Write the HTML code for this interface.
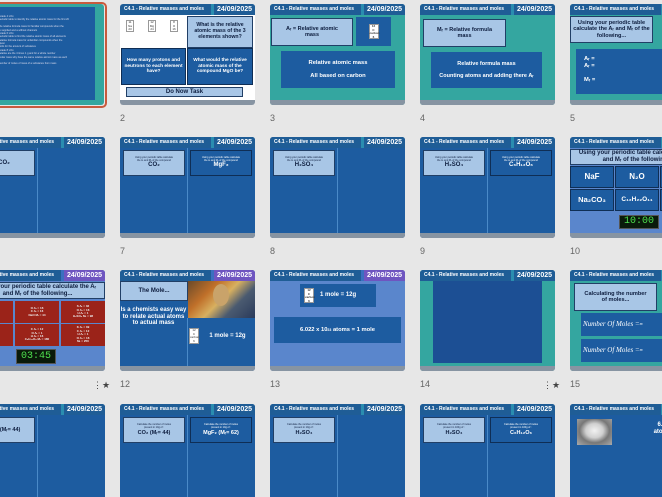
<!DOCTYPE html>
<html><head><meta charset="utf-8"><style>
*{margin:0;padding:0;box-sizing:border-box}
html,body{width:662px;height:497px;overflow:hidden}
body{background:#e7e7e7;font-family:"Liberation Sans",sans-serif}
#w{position:absolute;left:0;top:0;width:662px;height:497px;overflow:hidden}
.s{position:absolute;width:135px;height:101px;border-radius:3px;overflow:hidden;background:#1d5ca0}
.teal{background:#34a6a0}
.tex{background:#5a86cc}
.h{position:absolute;left:0;top:0;width:135px;height:11px;background:#1f5d96}
.h .t{position:absolute;left:4px;top:2px;font-size:5px;color:#fff;font-weight:bold;white-space:nowrap}
.h .d{position:absolute;right:0;top:0;width:44px;height:11px;background:#1f5d96;border-left:3px solid #2a8db0;color:#fff;font-weight:bold;font-size:7px;text-align:center;line-height:11px}
.h .d.p{background:#6f55c0;border-left-color:#3a6fc0}
.f{position:absolute;left:0;bottom:0;width:135px;height:5px;background:#8794a2}
.b{position:absolute;text-align:center;font-weight:bold;display:flex;align-items:center;justify-content:center;line-height:1.15}
.lt{background:#a8c6e6;color:#0d1d3e;border:1px solid #213f66}
.dk{background:#1d5ca0;color:#fff}
.dk2{background:#1d5ca0;color:#fff;border:1px solid #0f2e55}
.red{background:#9b2319;color:#eee;font-size:3px}
.lab{position:absolute;font-size:9px;color:#666}
.vl{position:absolute;top:11px;bottom:5px;width:1px;background:#4a8ac8}
.el{position:absolute;background:#fff;border:1px solid #999;font-size:3px;color:#333;text-align:center;line-height:1.2}
.tm{position:absolute;background:#0a1a0a;color:#4ee04e;font-family:"Liberation Mono",monospace;text-align:center;border:1px solid #555}
.star{position:absolute;font-size:9px;color:#444}
</style></head><body><div id="w">

<div style="position:absolute;left:-34px;top:2px;width:141px;height:106px;border:2px solid #c85a3e;border-radius:5px"></div>
<div class="s teal" style="left:-31px;top:4px;">
 <div class="b dk" style="left:0;top:3px;width:126px;height:93px;display:block;text-align:left;font-size:2.5px;font-weight:normal;color:#dde;padding:8px 0 0 30px;line-height:1.35">
  Grade 4 LOs:<br>periodic table to identify the relative atomic mass for the first 20<br><br>the relative formula mass for familiar compounds when the<br>is supplied and a without channels<br>Grade 6 LOs:<br>periodic table to find the relative atomic mass of all elements<br>relative formula mass for unfamiliar compounds when the<br>given<br>units for the amount of substance<br>Grade 8 LOs:<br>relative are the 4 times 1 g and for a whole number<br>molar mass why have the same relative atomic mass as each<br><br>number of moles of mass of a substance from mass
 </div>
</div>

<div class="s" style="left:120px;top:4px;background:#fff">
 <div class="h"><div class="t">C4.1 - Relative masses and moles</div><div class="d">24/09/2025</div></div>
 <div class="el" style="left:6px;top:16px;width:8px;height:12px">11<br>Na<br>23</div>
 <div class="el" style="left:28px;top:16px;width:8px;height:12px">12<br>Mg<br>24</div>
 <div class="el" style="left:50px;top:16px;width:8px;height:12px">8<br>O<br>16</div>
 <div class="b lt" style="left:67px;top:12px;width:66px;height:32px;font-size:5.2px">What is the relative atomic mass of the 3 elements shown?</div>
 <div class="b dk2" style="left:1px;top:44px;width:65px;height:37px;font-size:4.8px">How many protons and neutrons to each element have?</div>
 <div class="b dk2" style="left:67px;top:44px;width:66px;height:37px;font-size:4.8px">What would the relative atomic mass of the compound MgO be?</div>
 <div class="b lt" style="left:6px;top:83px;width:117px;height:10px;font-size:6px">Do Now Task</div>
 <div class="f"></div>
</div>
<div class="lab" style="left:120px;top:113px">2</div>

<div class="s teal" style="left:270px;top:4px">
 <div class="h"><div class="t">C4.1 - Relative masses and moles</div><div class="d">24/09/2025</div></div>
 <div class="b lt" style="left:1px;top:14px;width:82px;height:28px;font-size:5.5px">Aᵣ = Relative atomic<br>mass</div>
 <div class="b dk" style="left:86px;top:13px;width:35px;height:29px"><div class="el" style="position:static;width:10px;height:15px">12<br>C<br>carbon<br>6</div></div>
 <div class="b dk" style="left:11px;top:47px;width:114px;height:37px;font-size:5.8px">Relative atomic mass<br><br>All based on carbon</div>
 <div class="f"></div>
</div>
<div class="lab" style="left:270px;top:113px">3</div>

<div class="s teal" style="left:420px;top:4px">
 <div class="h"><div class="t">C4.1 - Relative masses and moles</div><div class="d">24/09/2025</div></div>
 <div class="b lt" style="left:3px;top:15px;width:83px;height:28px;font-size:5.5px">Mᵣ = Relative formula<br>mass</div>
 <div class="b dk" style="left:11px;top:48px;width:111px;height:36px;font-size:5.5px">Relative formula mass<br><br>Counting atoms and adding there Aᵣ</div>
 <div class="f"></div>
</div>
<div class="lab" style="left:420px;top:113px">4</div>

<div class="s teal" style="left:570px;top:4px">
 <div class="h"><div class="t">C4.1 - Relative masses and moles</div><div class="d">24/09/2025</div></div>
 <div class="b lt" style="left:0;top:12px;width:83px;height:27px;font-size:5.6px">Using your periodic table calculate the Aᵣ and Mᵣ of the following...</div>
 <div class="b dk" style="left:6px;top:45px;width:129px;height:45px;font-size:5.8px;display:block;text-align:left;padding:7px 0 0 8px;line-height:1.2">Aᵣ =<br>Aᵣ =<br><br>Mᵣ =</div>
 <div class="f"></div>
</div>
<div class="lab" style="left:570px;top:113px">5</div>

<div class="s" style="left:-30px;top:137px">
 <div class="h"><div class="t">C4.1 - Relative masses and moles</div><div class="d">24/09/2025</div></div>
 <div class="vl" style="left:67px"></div>
 <div class="b lt" style="left:3px;top:13px;width:62px;height:26px;font-size:6px">CO₂</div>
 <div class="f"></div>
</div>

<div class="s" style="left:120px;top:137px">
 <div class="h"><div class="t">C4.1 - Relative masses and moles</div><div class="d">24/09/2025</div></div>
 <div class="vl" style="left:67px"></div>
 <div class="b lt" style="left:3px;top:13px;width:62px;height:26px;font-size:6px;flex-direction:column"><span style="font-size:2.5px;font-weight:normal">Using your periodic table calculate<br>the Aᵣ and Mᵣ of the compound</span>CO₂</div>
 <div class="b dk2" style="left:70px;top:13px;width:62px;height:26px;font-size:6px;flex-direction:column"><span style="font-size:2.5px;font-weight:normal">Using your periodic table calculate<br>the Aᵣ and Mᵣ of the compound</span>MgF₂</div>
 <div class="f"></div>
</div>
<div class="lab" style="left:120px;top:246px">7</div>

<div class="s" style="left:270px;top:137px">
 <div class="h"><div class="t">C4.1 - Relative masses and moles</div><div class="d">24/09/2025</div></div>
 <div class="vl" style="left:67px"></div>
 <div class="b lt" style="left:3px;top:13px;width:62px;height:26px;font-size:6px;flex-direction:column"><span style="font-size:2.5px;font-weight:normal">Using your periodic table calculate<br>the Aᵣ and Mᵣ of the compound</span>H₂SO₄</div>
 <div class="f"></div>
</div>
<div class="lab" style="left:270px;top:246px">8</div>

<div class="s" style="left:420px;top:137px">
 <div class="h"><div class="t">C4.1 - Relative masses and moles</div><div class="d">24/09/2025</div></div>
 <div class="vl" style="left:67px"></div>
 <div class="b lt" style="left:3px;top:13px;width:62px;height:26px;font-size:6px;flex-direction:column"><span style="font-size:2.5px;font-weight:normal">Using your periodic table calculate<br>the Aᵣ and Mᵣ of the compound</span>H₂SO₄</div>
 <div class="b dk2" style="left:70px;top:13px;width:62px;height:26px;font-size:6px;flex-direction:column"><span style="font-size:2.5px;font-weight:normal">Using your periodic table calculate<br>the Aᵣ and Mᵣ of the compound</span>C₆H₁₂O₆</div>
 <div class="f"></div>
</div>
<div class="lab" style="left:420px;top:246px">9</div>

<div class="s tex" style="left:570px;top:137px">
 <div class="h"><div class="t">C4.1 - Relative masses and moles</div><div class="d">24/09/2025</div></div>
 <div class="b lt" style="left:0;top:12px;width:135px;height:16px;font-size:6px">Using your periodic table calculate the Aᵣ<br>and Mᵣ of the following...</div>
 <div class="b dk2" style="left:0;top:29px;width:44px;height:22px;font-size:8px">NaF</div>
 <div class="b dk2" style="left:45px;top:29px;width:44px;height:22px;font-size:8px">N₂O</div>
 <div class="b dk2" style="left:90px;top:29px;width:45px;height:22px;font-size:8px"></div>
 <div class="b dk2" style="left:0;top:52px;width:44px;height:22px;font-size:7.5px">Na₂CO₃</div>
 <div class="b dk2" style="left:45px;top:52px;width:44px;height:22px;font-size:6.5px">C₁₂H₂₂O₁₁</div>
 <div class="b dk2" style="left:90px;top:52px;width:45px;height:22px"></div>
 <div class="tm" style="left:49px;top:78px;width:40px;height:14px;font-size:10px;line-height:12px">10:00</div>
 <div class="f"></div>
</div>
<div class="lab" style="left:570px;top:246px">10</div>

<div class="s tex" style="left:-30px;top:270px">
 <div class="h"><div class="t">C4.1 - Relative masses and moles</div><div class="d p">24/09/2025</div></div>
 <div class="b lt" style="left:0;top:12px;width:135px;height:17px;font-size:6px">Using your periodic table calculate the Aᵣ<br>and Mᵣ of the following...</div>
 <div class="b red" style="left:0;top:31px;width:43px;height:22px"></div>
 <div class="b red" style="left:45px;top:31px;width:44px;height:22px">O Aᵣ = 16<br>C Aᵣ = 16<br>NaO Mᵣ = 44</div>
 <div class="b red" style="left:91px;top:31px;width:44px;height:22px">S Aᵣ = 32<br>O Aᵣ = 16<br>H Aᵣ = 1<br>H₂SO₄ Mᵣ = 98</div>
 <div class="b red" style="left:0;top:54px;width:43px;height:22px"></div>
 <div class="b red" style="left:45px;top:54px;width:44px;height:22px">C Aᵣ = 12<br>O Aᵣ = 1<br>H Aᵣ = 16<br>C₆H₁₂O₆ Mᵣ = 180</div>
 <div class="b red" style="left:91px;top:54px;width:44px;height:22px">K Aᵣ = 39<br>C Aᵣ = 12<br>H Aᵣ = 1<br>O Aᵣ = 16<br>Mᵣ = 250</div>
 <div class="tm" style="left:46px;top:79px;width:40px;height:15px;font-size:10px;line-height:13px">03:45</div>
 <div class="f"></div>
</div>
<div class="star" style="left:93px;top:380px">⋮★</div>

<div class="s" style="left:120px;top:270px">
 <div class="h"><div class="t">C4.1 - Relative masses and moles</div><div class="d p">24/09/2025</div></div>
 <div class="b lt" style="left:0;top:11px;width:68px;height:20px;font-size:6px">The Mole...</div>
 <div style="position:absolute;left:68px;top:11px;width:67px;height:37px;background:linear-gradient(135deg,#6a4a2a 0%,#c0702a 30%,#d8b060 50%,#4a5a70 70%,#2a3a5a 100%)"></div>
 <div style="position:absolute;left:93px;top:14px;width:16px;height:22px;border-radius:50%;background:#c9a36a"></div>
 <div class="b dk" style="left:0;top:32px;width:67px;height:30px;font-size:6px">Is a chemists easy way to relate actual atoms to actual mass</div>
 <div class="vl" style="left:67px;top:48px"></div>
 <div class="el" style="left:69px;top:58px;width:10px;height:16px">12<br>C<br>carbon<br>6</div>
 <div class="b" style="left:80px;top:60px;width:55px;height:12px;color:#fff;font-size:6px">1 mole = 12g</div>
 <div class="f"></div>
</div>
<div class="lab" style="left:120px;top:379px">12</div>

<div class="s tex" style="left:270px;top:270px">
 <div class="h"><div class="t">C4.1 - Relative masses and moles</div><div class="d p">24/09/2025</div></div>
 <div class="b dk" style="left:30px;top:14px;width:76px;height:23px;justify-content:flex-start;padding-left:4px"><div class="el" style="position:static;width:10px;height:15px">12<br>C<br>carbon<br>6</div><span style="color:#fff;font-size:6px;margin-left:6px">1 mole = 12g</span></div>
 <div class="b dk" style="left:4px;top:47px;width:127px;height:26px;font-size:5.8px">6.022 x 10 <sup style="font-size:3.5px">23</sup>&nbsp;atoms = 1 mole</div>
 <div class="f"></div>
</div>
<div class="lab" style="left:270px;top:379px">13</div>

<div class="s teal" style="left:420px;top:270px">
 <div class="h"><div class="t">C4.1 - Relative masses and moles</div><div class="d">24/09/2025</div></div>
 <div style="position:absolute;left:13px;top:11px;width:109px;height:82px;background:#1c4f94"></div>
 <div class="f"></div>
</div>
<div class="lab" style="left:420px;top:379px">14</div>
<div class="star" style="left:543px;top:380px">⋮★</div>

<div class="s teal" style="left:570px;top:270px">
 <div class="h"><div class="t">C4.1 - Relative masses and moles</div><div class="d">24/09/2025</div></div>
 <div class="b lt" style="left:4px;top:13px;width:83px;height:28px;font-size:5.6px">Calculating the number<br>of moles...</div>
 <div class="b dk" style="left:11px;top:43px;width:124px;height:23px;font-family:'Liberation Serif',serif;font-style:italic;font-weight:normal;font-size:7px;justify-content:flex-start;padding-left:2px">Number Of Moles = <span style="font-size:4px">m</span></div>
 <div class="b dk" style="left:11px;top:69px;width:124px;height:23px;font-family:'Liberation Serif',serif;font-style:italic;font-weight:normal;font-size:7px;justify-content:flex-start;padding-left:2px">Number Of Moles = <span style="font-size:4px">m</span></div>
 <div class="f"></div>
</div>
<div class="lab" style="left:570px;top:379px">15</div>

<div class="s" style="left:-30px;top:404px">
 <div class="h"><div class="t">C4.1 - Relative masses and moles</div><div class="d">24/09/2025</div></div>
 <div class="vl" style="left:67px"></div>
 <div class="b lt" style="left:3px;top:13px;width:62px;height:26px;font-size:5.5px">CO₂ (Mᵣ= 44)</div>
</div>

<div class="s" style="left:120px;top:404px">
 <div class="h"><div class="t">C4.1 - Relative masses and moles</div><div class="d">24/09/2025</div></div>
 <div class="vl" style="left:67px"></div>
 <div class="b lt" style="left:3px;top:13px;width:62px;height:26px;font-size:5.5px;flex-direction:column"><span style="font-size:2.5px;font-weight:normal">Calculate the number of moles<br>present in 10g of :</span>CO₂ (Mᵣ= 44)</div>
 <div class="b dk2" style="left:70px;top:13px;width:62px;height:26px;font-size:5.5px;flex-direction:column"><span style="font-size:2.5px;font-weight:normal">Calculate the number of moles<br>present in 10g of :</span>MgF₂ (Mᵣ= 62)</div>
</div>

<div class="s" style="left:270px;top:404px">
 <div class="h"><div class="t">C4.1 - Relative masses and moles</div><div class="d">24/09/2025</div></div>
 <div class="vl" style="left:67px"></div>
 <div class="b lt" style="left:3px;top:13px;width:62px;height:26px;font-size:5.5px;flex-direction:column"><span style="font-size:2.5px;font-weight:normal">Calculate the number of moles<br>present in 10g of :</span>H₂SO₄</div>
</div>

<div class="s" style="left:420px;top:404px">
 <div class="h"><div class="t">C4.1 - Relative masses and moles</div><div class="d">24/09/2025</div></div>
 <div class="vl" style="left:67px"></div>
 <div class="b lt" style="left:3px;top:13px;width:62px;height:26px;font-size:5.5px;flex-direction:column"><span style="font-size:2.5px;font-weight:normal">Calculate the number of moles<br>present in 100g of :</span>H₂SO₄</div>
 <div class="b dk2" style="left:70px;top:13px;width:62px;height:26px;font-size:5.5px;flex-direction:column"><span style="font-size:2.5px;font-weight:normal">Calculate the number of moles<br>present in 100g of :</span>C₆H₁₂O₆</div>
</div>

<div class="s" style="left:570px;top:404px">
 <div class="h"><div class="t">C4.1 - Relative masses and moles</div><div class="d">24/09/2025</div></div>
 <div style="position:absolute;left:7px;top:15px;width:35px;height:26px;background:radial-gradient(ellipse at 50% 45%,#f2f2f2 0%,#d0d0d0 35%,#777 60%,#aaa 100%)"></div>
 <div class="b" style="left:50px;top:16px;width:90px;height:18px;color:#fff;font-size:6px">6.022<br>atoms =</div>
</div>

</div></body></html>
